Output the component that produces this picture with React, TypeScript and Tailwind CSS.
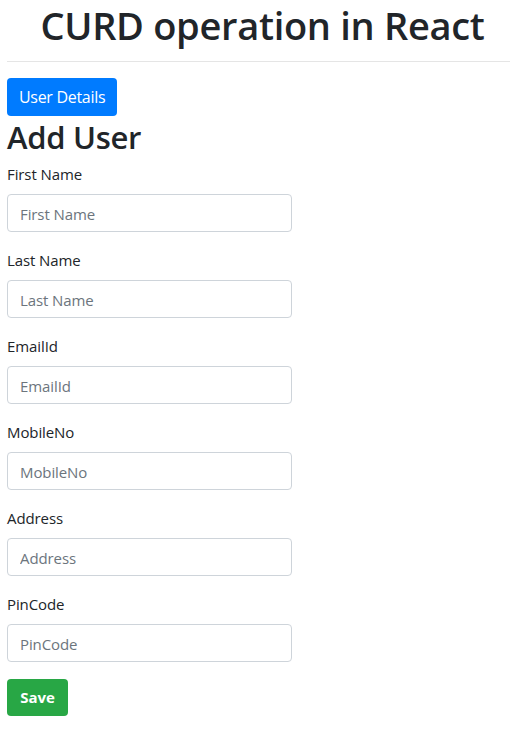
import React, { useState } from 'react';

const fields = [
    { key: 'firstName', label: 'First Name' },
    { key: 'lastName', label: 'Last Name' },
    { key: 'emailId', label: 'EmailId' },
    { key: 'mobileNo', label: 'MobileNo' },
    { key: 'address', label: 'Address' },
    { key: 'pinCode', label: 'PinCode' },
];

export default function App() {
    const [values, setValues] = useState<Record<string, string>>({});

    return (
        <div className="min-h-screen bg-white pl-[7px] text-[#212529] font-['Open_Sans','Noto_Sans',sans-serif]">
            {/* Header */}
            <h1 className="h-[45px] pt-[2px] pl-[8px] text-center text-[38px] leading-[46px] font-semibold tracking-[-0.3px]">
                CURD operation in React
            </h1>
            <hr className="mt-4 mb-4 border-0 border-t border-[#e5e5e5]" />

            <button className="h-[38px] px-3 bg-[#007bff] text-white text-[16px] rounded-[4px] tracking-[-0.3px]">
                User Details
            </button>

            <h2 className="mt-0 mb-2 text-[31px] leading-[38px] font-semibold tracking-[-0.3px] pt-[2px] h-[38px]">Add User</h2>

            <form className="flex flex-col" onSubmit={(e) => e.preventDefault()}>
                {fields.map((f) => (
                    <div key={f.key} className="mb-4 flex flex-col">
                        <label className="mb-2 text-[15px] leading-6 tracking-[-0.1px]">{f.label}</label>
                        <input
                            className="w-[285px] h-[38px] pt-[1px] px-3 border border-[#ced4da] rounded-[4px] text-[15px] tracking-[-0.1px] placeholder:text-[#6c757d] outline-none"
                            placeholder={f.label}
                            value={values[f.key] ?? ''}
                            onChange={(e) => setValues({ ...values, [f.key]: e.target.value })}
                        />
                    </div>
                ))}
                <div>
                    <button
                        type="submit"
                        className="mt-[1px] h-[37px] w-[61px] bg-[#28a745] text-white text-[15px] font-bold rounded-[4px]"
                    >
                        Save
                    </button>
                </div>
            </form>
        </div>
    );
}
